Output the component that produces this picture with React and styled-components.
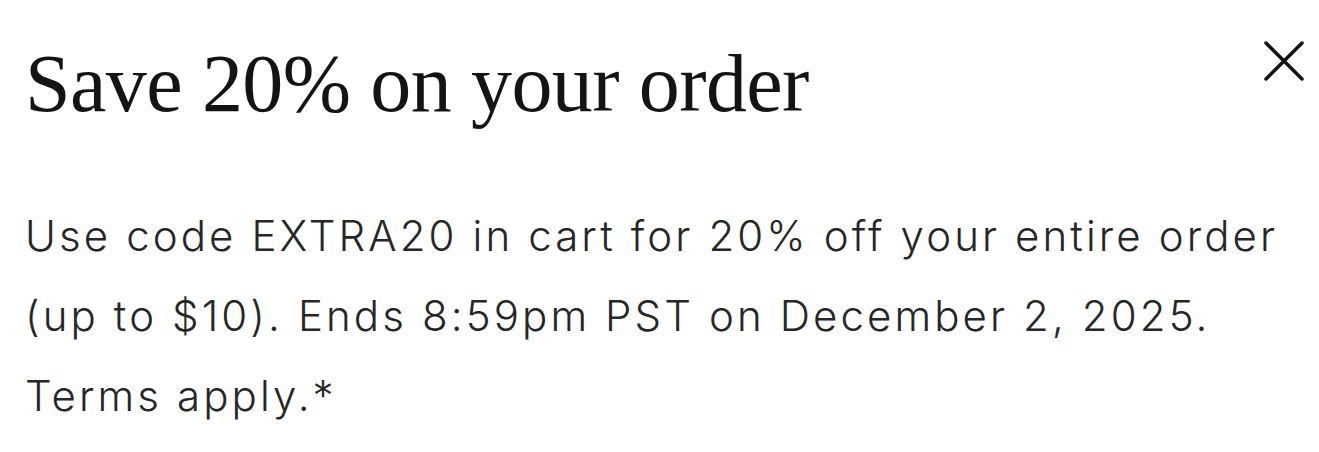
import React from 'react';
import styled, { createGlobalStyle } from 'styled-components';

const Global = createGlobalStyle`
  html, body {
    margin: 0;
    padding: 0;
    background: #fff;
  }
`;

const Panel = styled.div`
  width: 1319px;
  height: 452px;
  box-sizing: border-box;
  padding: 44px 0 0 25px;
  background: #fff;
`;

const Header = styled.div`
  display: flex;
  justify-content: space-between;
  align-items: flex-start;
  height: 80px;
`;

const Title = styled.h1`
  margin: 0;
  font-family: "Liberation Serif", serif;
  font-weight: 400;
  font-size: 82px;
  line-height: 80px;
  letter-spacing: -0.6px;
  color: #141414;
`;

const Close = styled.button`
  border: none;
  background: none;
  padding: 0;
  margin: -3px 15px 0 0;
  width: 40px;
  height: 40px;
  cursor: pointer;
  svg { display: block; }
`;

const Body = styled.p`
  margin: 72px 0 0;
  width: 1285px;
  font-family: Inter, "Liberation Sans", sans-serif;
  font-size: 42px;
  font-weight: 300;
  line-height: 80px;
  letter-spacing: 3.1px;
  color: #262626;
`;

export default function App() {
  return (
    <Panel>
      <Global />
      <Header>
        <Title>Save 20% on your order</Title>
        <Close aria-label="Close">
          <svg width="40" height="40" viewBox="0 0 40 40">
            <path d="M2 2 L38 38 M38 2 L2 38" stroke="#111" strokeWidth="3.5" strokeLinecap="round" />
          </svg>
        </Close>
      </Header>
      <Body>
        Use code EXTRA20 in cart for 20% off your entire order (up to $10). Ends 8:59pm PST on December 2, 2025. Terms apply.*
      </Body>
    </Panel>
  );
}
